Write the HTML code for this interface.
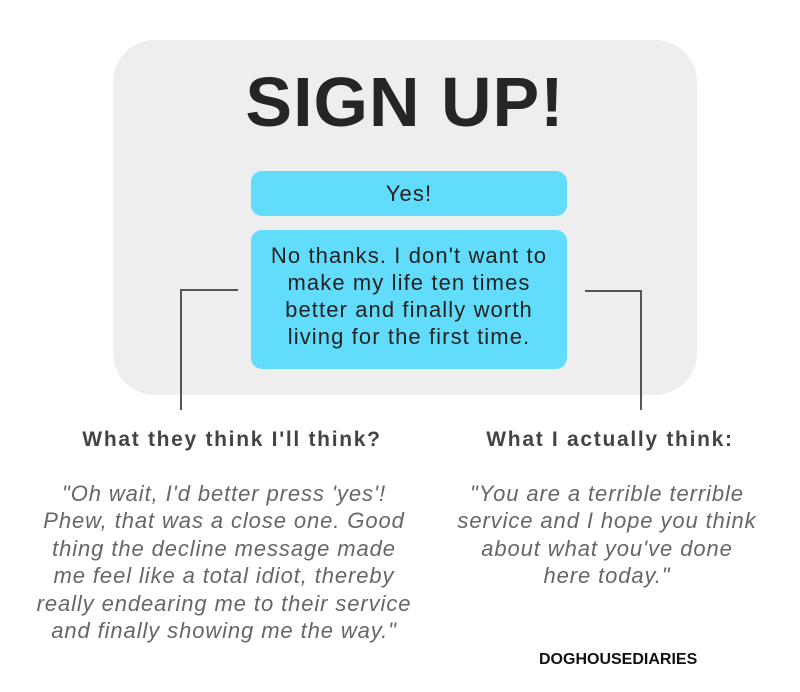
<!DOCTYPE html>
<html><head><style>
body{margin:0;width:800px;height:692px;background:#fff;font-family:"Liberation Sans",sans-serif;position:relative;overflow:hidden}
.box{position:absolute;left:113px;top:40px;width:584px;height:355px;background:#eeeeee;border-radius:42px}
.title{position:absolute;left:113px;width:584px;top:62px;text-align:center;font-size:70px;font-weight:bold;color:#252525;letter-spacing:1px}
.btn{position:absolute;left:251px;width:316px;background:#62dcfb;border-radius:11px;color:#222;text-align:center;font-size:22px;letter-spacing:1.1px}
.h{position:absolute;top:428px;font-weight:bold;font-size:21px;letter-spacing:1.7px;color:#444;text-align:center}
.q{position:absolute;top:480px;font-style:italic;font-size:22px;letter-spacing:0.9px;line-height:27.4px;color:#666;text-align:center}
.l{position:absolute;background:#555}
</style></head><body>
<div class="box"></div>
<div class="title">SIGN UP!</div>
<div class="btn" style="top:171px;height:45px;line-height:45px">Yes!</div>
<div class="btn" style="top:230px;height:139px;padding-top:12px;box-sizing:border-box;line-height:27px">No thanks. I don't want to<br>make my life ten times<br>better and finally worth<br>living for the first time.</div>
<div class="l" style="left:180px;top:289px;width:58px;height:2px"></div>
<div class="l" style="left:180px;top:289px;width:2px;height:121px"></div>
<div class="l" style="left:585px;top:290px;width:57px;height:2px"></div>
<div class="l" style="left:640px;top:290px;width:2px;height:120px"></div>
<div class="h" style="left:32px;width:400px">What they think I'll think?</div>
<div class="h" style="left:410px;width:400px">What I actually think:</div>
<div class="q" style="left:4px;width:440px">"Oh wait, I'd better press 'yes'!<br>Phew, that was a close one. Good<br>thing the decline message made<br>me feel like a total idiot, thereby<br>really endearing me to their service<br>and finally showing me the way."</div>
<div class="q" style="left:397px;width:420px">"You are a terrible terrible<br>service and I hope you think<br>about what you've done<br>here today."</div>
<div style="position:absolute;left:539px;top:651px;font-weight:bold;font-size:16px;color:#111">DOGHOUSEDIARIES</div>
</body></html>
